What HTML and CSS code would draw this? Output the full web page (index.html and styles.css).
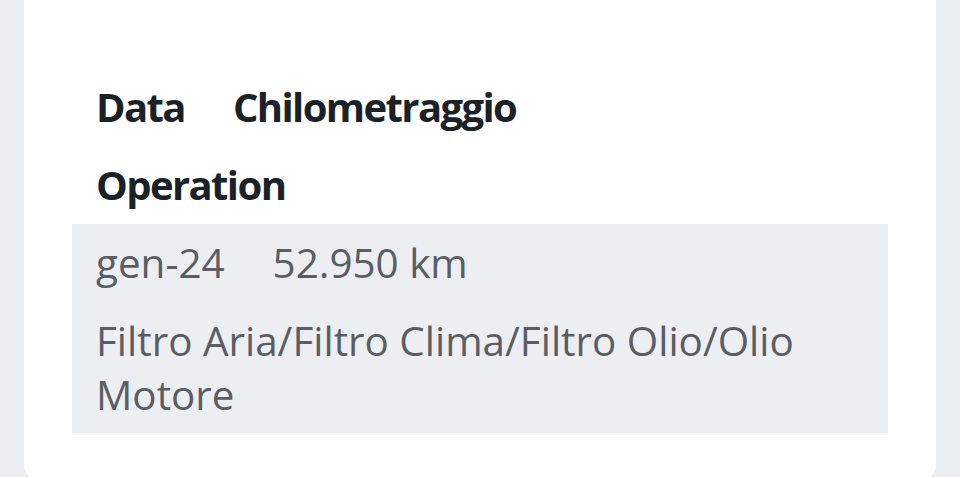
FILE: index.html
```html
<!DOCTYPE html>
<html lang="it">
<head>
<meta charset="utf-8">
<title>Interventi</title>
<link rel="stylesheet" href="styles.css">
</head>
<body>
<main class="card">
  <div class="list">
    <div class="line head">
      <div class="cell">Data</div>
      <div class="cell">Chilometraggio</div>
      <div class="cell wide">Operation</div>
    </div>
    <div class="line item">
      <div class="cell">gen-24</div>
      <div class="cell">52.950 km</div>
      <div class="cell wide">Filtro Aria/Filtro Clima/Filtro Olio/Olio Motore</div>
    </div>
  </div>
</main>
</body>
</html>
```
FILE: styles.css
```css
html, body {
  margin: 0;
  padding: 0;
}
body {
  background: #edeef2;
  font-family: "Open Sans", "Noto Sans", sans-serif;
  height: 477px;
  overflow: hidden;
}
.card {
  background: #ffffff;
  margin: 0 24px;
  padding: 68px 48px 46px;
  border-radius: 0 0 14px 14px;
}
.line {
  display: flex;
  flex-wrap: wrap;
}
.cell {
  padding: 12px 24px;
  font-size: 40px;
  line-height: 54px;
}
.wide {
  flex-basis: 100%;
  box-sizing: border-box;
}
.head .cell {
  font-weight: 700;
  letter-spacing: -1.6px;
  color: #1a2228;
}
.item {
  background: #edeef2;
  color: #5a5e64;
  box-shadow: 0 2px 0 #f6f6f8;
}
.item .cell {
  font-size: 40.4px;
}
.item .wide {
  padding-bottom: 11px;
}
```
